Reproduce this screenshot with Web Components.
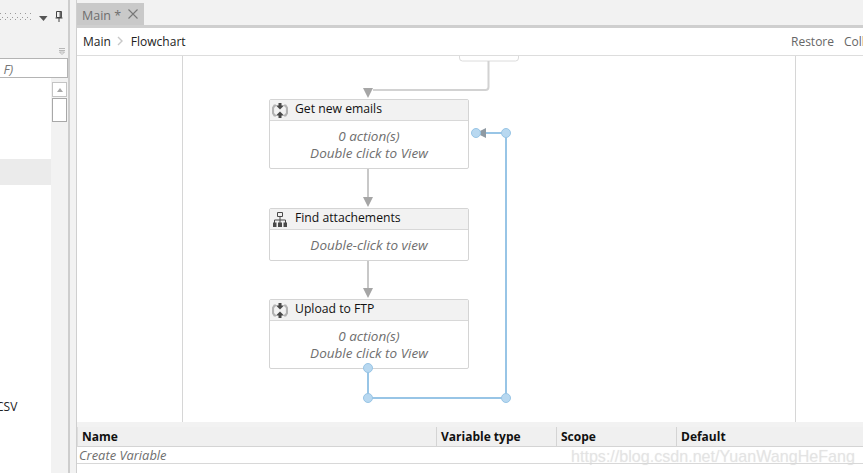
<!DOCTYPE html>
<html>
<head>
<meta charset="utf-8">
<title>Main</title>
<style>
  html, body { margin: 0; height: 100%; overflow: hidden; background: #f2f2f2; }
  body { font-family: "Open Sans", "Noto Sans", sans-serif; font-size: 12px; color: #111; }
</style>
</head>
<body>
<app-shell>
  <side-panel slot="left"></side-panel>
  <tab-strip slot="right"></tab-strip>
  <bread-bar slot="right"></bread-bar>
  <flow-canvas slot="right">
    <flow-node style="left:192px;top:43px" title-text="Get new emails" icon="seq" height="70">
      <div>0 action(s)</div><div>Double click to View</div>
    </flow-node>
    <flow-node style="left:192px;top:152px" title-text="Find attachements" icon="tree" height="53">
      <div>Double-click to view</div>
    </flow-node>
    <flow-node style="left:192px;top:243px" title-text="Upload to FTP" icon="seq" height="70">
      <div>0 action(s)</div><div>Double click to View</div>
    </flow-node>
  </flow-canvas>
  <var-table slot="right"></var-table>
</app-shell>
<script>
class AppShell extends HTMLElement {
    constructor() {
        super();
        this.attachShadow({ mode: "open" });
        this.shadowRoot.innerHTML = `
            <style>
                :host { display: grid; grid-template-columns: 69px 1fr; width: 863px; height: 473px; overflow: hidden; position: relative; }
                .right { display: flex; flex-direction: column; margin-left: 7px; border-left: 1px solid #cfcfcf; min-width: 0; height: 473px; box-sizing: border-box; }
                .mark { position: absolute; left: 571px; top: 447px; font: 16.1px "Liberation Sans", sans-serif; color: rgba(222,222,222,.62); white-space: nowrap; text-shadow: 0 0 1px rgba(200,200,200,.4); }
            </style>
            <slot name="left"></slot>
            <div class="right"><slot name="right"></slot></div>
            <div class="mark">https://blog.csdn.net/YuanWangHeFang</div>
        `;
    }
}

class SidePanel extends HTMLElement {
    constructor() {
        super();
        this.attachShadow({ mode: "open" });
        this.shadowRoot.innerHTML = `
            <style>
                :host { display: flex; flex-direction: column; height: 473px; box-sizing: border-box; background: #f2f2f2; border-right: 2px solid #cdcdcd; width: 70px; margin-right: -1px; }
                .head { height: 58px; flex: none; position: relative; box-sizing: border-box; }
                .head svg { position: absolute; }
                .search { height: 20px; flex: none; background: #fff; border: 1px solid #b4b4b4; border-left: 0; box-sizing: border-box; font-style: italic; color: #777; line-height: 21px; font-size: 13px; }
                .body { flex: 1; display: flex; min-height: 0; background: #fff; }
                .list { width: 51px; flex: none; padding-top: 81px; overflow: hidden; }
                .sel { height: 26px; background: #ebebeb; }
                .csv { margin: 214px 0 0 -4px; line-height: 16px; color: #222; }
                .bar { flex: 1; background: #f2f2f2; padding: 4px 1px 0 1px; display: flex; flex-direction: column; gap: 1px; }
                .btn { height: 15px; border: 1px solid #c4c4c4; background: #fff; box-sizing: border-box; display: flex; align-items: center; justify-content: center; flex: none; }
                .btn i { border: 3.5px solid transparent; border-bottom: 4px solid #a8a8a8; border-top: 0; }
                .thumb { height: 24px; border: 1px solid #a8a8a8; background: #fff; box-sizing: border-box; flex: none; }
            </style>
            <div class="head">
                <svg style="left:0;top:13px" width="31" height="7">
                    <defs><pattern id="g" width="5" height="6" patternUnits="userSpaceOnUse">
                        <rect x="0" y="0" width="1" height="1" fill="#9c9c9c"/>
                        <rect x="2" y="4" width="1" height="1" fill="#9c9c9c"/>
                    </pattern></defs>
                    <rect width="31" height="7" fill="url(#g)"/>
                </svg>
                <svg style="left:39px;top:16px" width="9" height="5"><path d="M0 0h8.500L4.500 5z" fill="#555"/></svg>
                <svg style="left:55px;top:11px" width="8" height="11"><path d="M1.500.5h5v6h-5zM.5 7h7M4 7v4" fill="none" stroke="#444"/><path d="M4.500 1v5h2V1z" fill="#666"/></svg>
                <svg style="left:59px;top:48px" width="7" height="7"><path d="M0 .5h6M0 2.500h6M.5 4h5L3 6.500z" fill="none" stroke="#b0b0b0" stroke-width=".9"/></svg>
            </div>
            <div class="search">&nbsp;F)</div>
            <div class="body">
                <div class="list"><div class="sel"></div><div class="csv">CSV</div></div>
                <div class="bar"><div class="btn"><i></i></div><div class="thumb"></div></div>
            </div>
        `;
    }
}

class TabStrip extends HTMLElement {
    constructor() {
        super();
        this.attachShadow({ mode: "open" });
        this.shadowRoot.innerHTML = `
            <style>
                :host { display: block; height: 28px; flex: none; box-sizing: border-box; padding-top: 3px; background: #f2f2f2; border-bottom: 3px solid #cfcfcf; }
                .tab { width: 67px; height: 22px; background: #c9c9c9; color: #6e6e6e; font-size: 12.5px; padding: 3px 0 0 5px; box-sizing: border-box; display: flex; align-items: center; gap: 7px; }
                svg { flex: none; margin-top: -3px; }
            </style>
            <div class="tab"><span>Main *</span>
                <svg width="10" height="10"><path d="M.5.5l9 9M9.5.5l-9 9" stroke="#777" stroke-width="1.1"/></svg>
            </div>
        `;
    }
}

class BreadBar extends HTMLElement {
    constructor() {
        super();
        this.attachShadow({ mode: "open" });
        this.shadowRoot.innerHTML = `
            <style>
                :host { display: flex; height: 28px; flex: none; align-items: center; box-sizing: border-box; background: #fff; border-bottom: 1px solid #ddd; padding: 0 0 1px 6px; font-size: 12px; white-space: nowrap; overflow: hidden; }
                svg { margin: 0 8px 0 6px; }
                .path { color: #222; }
                .acts { margin-left: auto; color: #666; display: flex; gap: 10px; width: 72px; overflow: hidden; flex: none; }
            </style>
            <span class="path">Main</span>
            <svg width="6" height="10"><path d="M1 1l4 4-4 4" fill="none" stroke="#c8c8c8" stroke-width="1.4"/></svg>
            <span class="path">Flowchart</span>
            <div class="acts"><span>Restore</span><span>Collapse</span></div>
        `;
    }
}

class FlowCanvas extends HTMLElement {
    constructor() {
        super();
        this.attachShadow({ mode: "open" });
        this.shadowRoot.innerHTML = `
            <style>
                :host { display: block; position: relative; height: 366px; flex: none; background: #fff; overflow: hidden; }
                svg { position: absolute; left: 0; top: 0; z-index: 1; }
            </style>
            <svg width="786" height="366">
                <path d="M105.500 0v366M718.500 0v366" stroke="#d6d6d6" fill="none"/>
                <rect x="382.500" y="-20" width="59" height="25" rx="3" fill="#fff" stroke="#dcdcdc"/>
                <path d="M411.500 5v26a3 3 0 0 1-3 3H296" fill="none" stroke="#d2d2d2" stroke-width="2"/>
                <path d="M286 32h10l-5 10z" fill="#a6a6a6"/>
                <path d="M291 113v30M291 205v29" stroke="#c8c8c8" stroke-width="2" fill="none"/>
                <path d="M286 141h10l-5 10zM286 232h10l-5 10z" fill="#a6a6a6"/>
                <path d="M291 312v30h138V77H408" fill="none" stroke="#98c5e6" stroke-width="2"/>
                <path d="M409 72v10l-10-5z" fill="#8f9aa3"/>
                <g fill="#b8d8f0" stroke="#98c5e6">
                    <circle cx="399" cy="77" r="4.500"/>
                    <circle cx="429" cy="77" r="4.500"/>
                    <circle cx="291" cy="312" r="4.500"/>
                    <circle cx="291" cy="342" r="4.500"/>
                    <circle cx="429" cy="342" r="4.500"/>
                </g>
            </svg>
            <slot></slot>
        `;
    }
}

class FlowNode extends HTMLElement {
    constructor() {
        super();
        this.attachShadow({ mode: "open" });
    }

    connectedCallback() {
        const icons = {
            seq: `<path d="M4 3.500H2.500L1 6v5l1.500 2.500H4M12 3.500h1.500L15 6v5l-1.500 2.500H12" fill="none" stroke="#b2b2b2" stroke-width="2.200"/>
                  <path d="M6.500 1h3v2.500H12L8 7.500 4 3.500h2.500zM6.500 16h3v-2.500H12L8 9.500l-4 4h2.500z" fill="#484848"/>`,
            tree: `<path d="M5.500 1.500h5v4h-5zM8 5.500v3.500M2.500 12V9h11v3M8 9v3" fill="none" stroke="#4a4a4a"/>
                   <path d="M1 11.500h3.500V16H1zM6 11.500h4V16H6zM11.500 11.500H15V16h-3.500z" fill="#4a4a4a"/>`
        };
        this.shadowRoot.innerHTML = `
            <style>
                :host { display: block; position: absolute; width: 200px; height: ${this.getAttribute("height")}px; box-sizing: border-box; background: #fff; border: 1px solid #d4d4d4; border-radius: 2px; }
                .top { height: 20px; background: #f2f2f2; border-bottom: 1px solid #d8d8d8; display: flex; align-items: center; padding-left: 2px; font-size: 12.2px; color: #111; gap: 7px; }
                svg { flex: none; margin-top: 1px; }
                span { margin-top: -3px; }
                .body { text-align: center; font-style: italic; color: #6f6f6f; font-size: 13.500px; line-height: 17px; padding-top: 7px; }
            </style>
            <div class="top">
                <svg width="16" height="17" viewBox="0 0 16 17">${icons[this.getAttribute("icon")]}</svg>
                <span>${this.getAttribute("title-text")}</span>
            </div>
            <div class="body"><slot></slot></div>
        `;
    }
}

class VarTable extends HTMLElement {
    constructor() {
        super();
        this.attachShadow({ mode: "open" });
        this.shadowRoot.innerHTML = `
            <style>
                :host { display: block; flex: 1; background: #fff; border-top: 5px solid #f2f2f2; font-size: 12px; box-sizing: border-box; min-height: 0; }
                .head { display: grid; grid-template-columns: 359px 120px 120px 1fr; height: 19px; background: #f0f0f0; border-bottom: 1px solid #d4d4d4; border-left: 1px solid #ddd; font-weight: 700; line-height: 19px; color: #111; }
                .head span { padding-left: 4px; border-right: 1px solid #d4d4d4; }
                .head span:last-child { border-right: 0; }
                .row { height: 16px; border-bottom: 1px solid #d8d8d8; font-style: italic; color: #6f6f6f; font-size: 12.900px; line-height: 17px; padding-left: 2px; }
            </style>
            <div class="head"><span>Name</span><span>Variable type</span><span>Scope</span><span>Default</span></div>
            <div class="row">Create Variable</div>
        `;
    }
}

customElements.define("app-shell", AppShell);
customElements.define("side-panel", SidePanel);
customElements.define("tab-strip", TabStrip);
customElements.define("bread-bar", BreadBar);
customElements.define("flow-canvas", FlowCanvas);
customElements.define("flow-node", FlowNode);
customElements.define("var-table", VarTable);
</script>
</body>
</html>
